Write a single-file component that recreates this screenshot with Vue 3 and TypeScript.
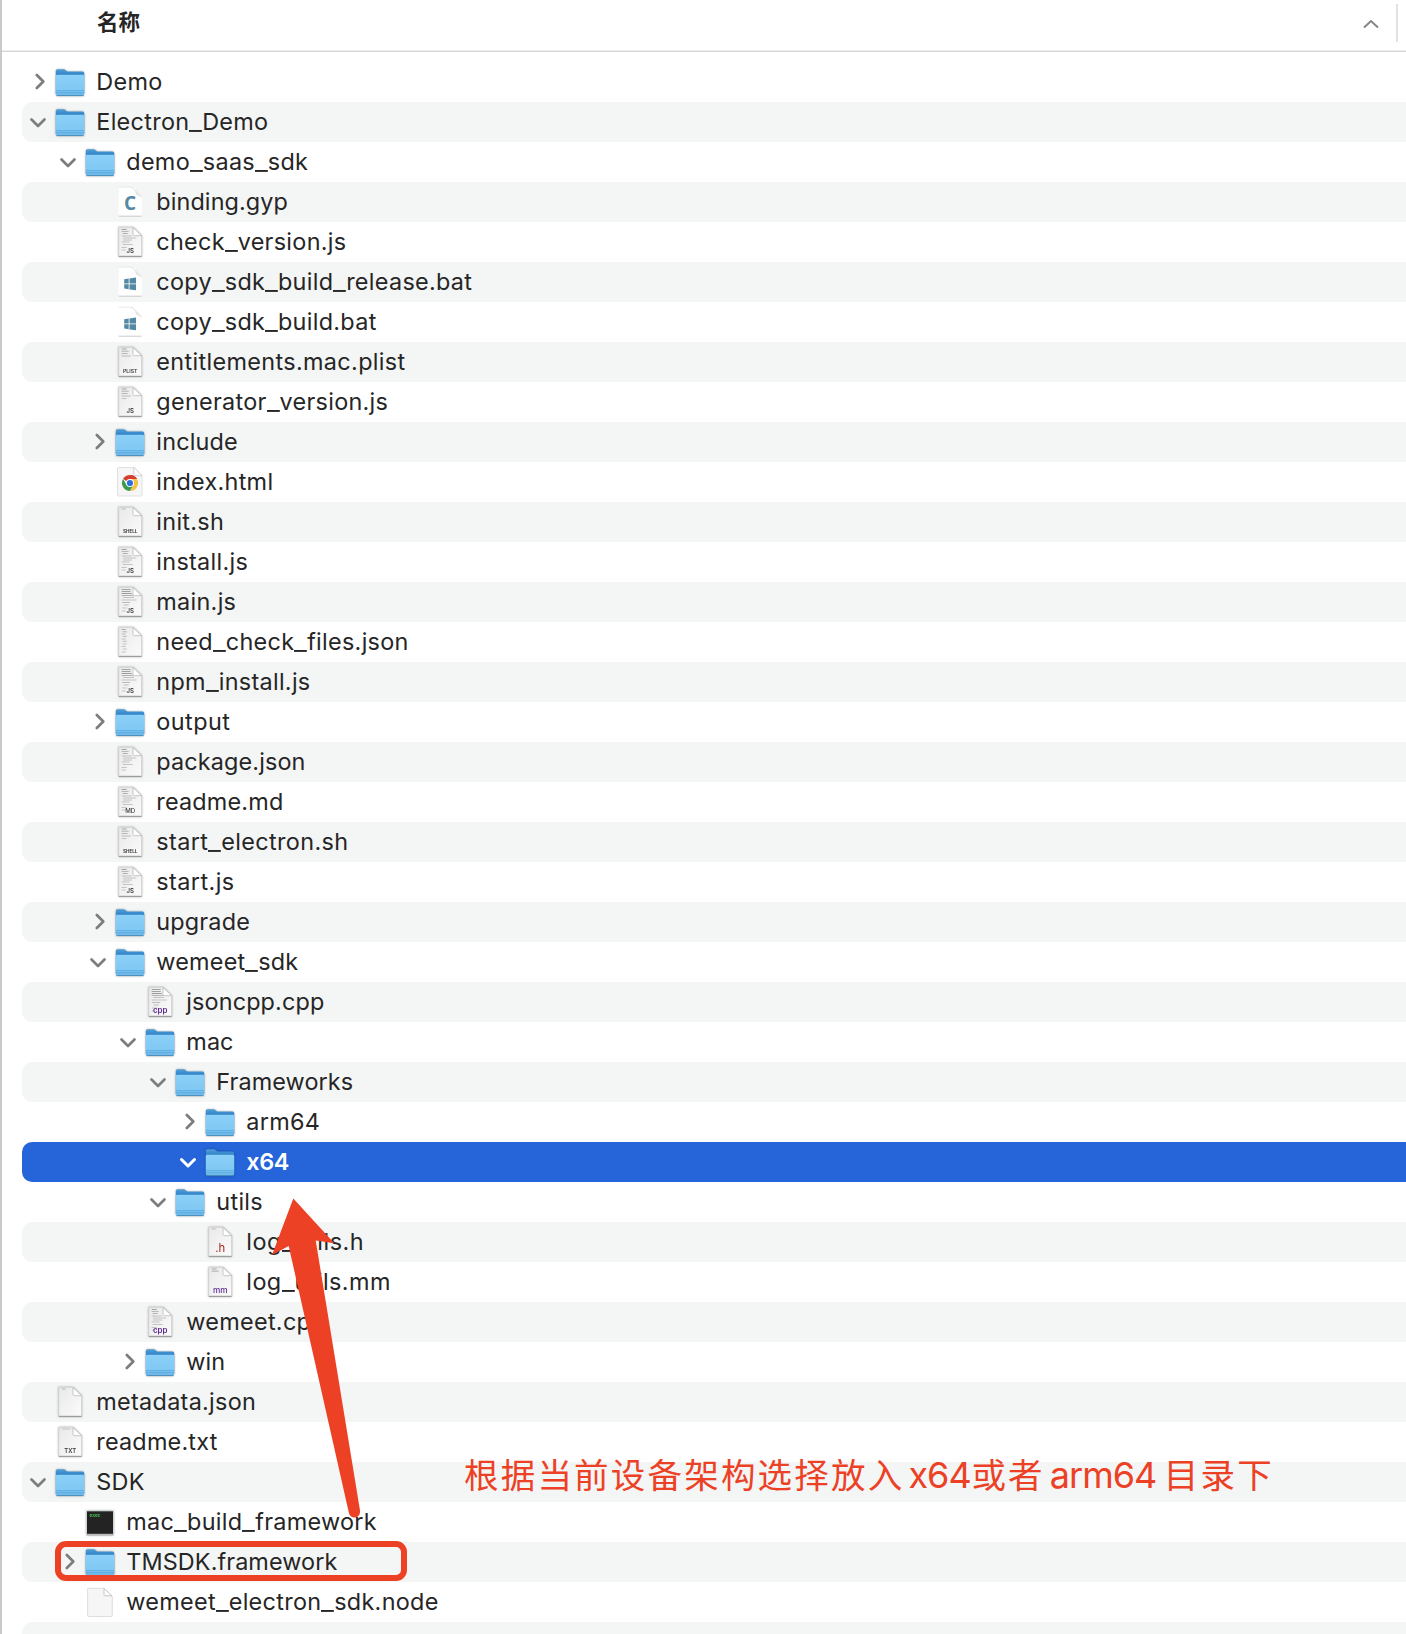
<script setup lang="ts">
type Kind = 'folder' | 'plain' | 'doc' | 'badge' | 'exec' | 'blank'

interface Entry {
  name: string
  level: number
  kind: Kind
  open?: boolean
  selected?: boolean
  /** letter-spacing correction in px */
  track?: number
  /** label printed on the document */
  tag?: string
  /** miniature preview: [x, y, width, opacity] */
  lines?: number[][]
}

const dense = [[9.5, 7.5, 5, 0.5], [9.5, 9.5, 7, 0.35], [10.5, 11.5, 5, 0.4], [9.5, 14, 10, 0.3], [11, 16, 13, 0.3], [11, 18, 9, 0.3], [9.5, 20, 8, 0.3], [10.5, 22.5, 10, 0.3], [9.5, 25.5, 5, 0.3], [9.5, 28, 4, 0.3]]
const heavy = [[9.5, 7.5, 9, 0.5], [9.5, 9.5, 9, 0.5], [9.5, 11.5, 10, 0.55], [9.5, 13.5, 12, 0.4], [11, 15.5, 11, 0.3], [9.5, 18, 15, 0.3], [10, 20.5, 8, 0.35], [11.5, 23, 5, 0.35], [10, 26, 5, 0.3], [9.5, 29, 4, 0.3]]
const short = [[9.5, 7, 5, 0.45], [9.5, 9.2, 7, 0.4], [9.5, 11.5, 6, 0.35], [9.5, 14, 9, 0.35], [10, 16.5, 4, 0.3]]
const column = [[9.5, 7.5, 4, 0.4], [10.5, 9.8, 4, 0.4], [9.5, 12, 4, 0.3], [10.5, 14.3, 4, 0.35], [9.5, 17, 4, 0.3], [10.5, 19.3, 4, 0.35], [10.5, 22, 4, 0.3], [9.5, 24.5, 4, 0.3], [10.5, 27, 4, 0.3], [9.5, 30, 4, 0.3]]
const tiny = [[9.5, 7, 4, 0.35]]

const entries: Entry[] = [
  { name: 'Demo', level: 0, kind: 'folder', open: false },
  { name: 'Electron_Demo', level: 0, kind: 'folder', open: true },
  { name: 'demo_saas_sdk', level: 1, kind: 'folder', open: true },
  { name: 'binding.gyp', level: 2, kind: 'badge', tag: 'C', track: -0.19 },
  { name: 'check_version.js', level: 2, kind: 'doc', tag: 'JS', lines: dense },
  { name: 'copy_sdk_build_release.bat', level: 2, kind: 'badge', tag: 'win' },
  { name: 'copy_sdk_build.bat', level: 2, kind: 'badge', tag: 'win' },
  { name: 'entitlements.mac.plist', level: 2, kind: 'doc', tag: 'PLIST', lines: short.slice(0, 4), track: 0.05 },
  { name: 'generator_version.js', level: 2, kind: 'doc', tag: 'JS', lines: short },
  { name: 'include', level: 2, kind: 'folder', open: false, track: -0.12 },
  { name: 'index.html', level: 2, kind: 'badge', tag: 'chrome' },
  { name: 'init.sh', level: 2, kind: 'doc', tag: 'SHELL', lines: tiny },
  { name: 'install.js', level: 2, kind: 'doc', tag: 'JS', lines: dense },
  { name: 'main.js', level: 2, kind: 'doc', tag: 'JS', lines: heavy },
  { name: 'need_check_files.json', level: 2, kind: 'plain', lines: column },
  { name: 'npm_install.js', level: 2, kind: 'doc', tag: 'JS', lines: heavy },
  { name: 'output', level: 2, kind: 'folder', open: false, track: 0.15 },
  { name: 'package.json', level: 2, kind: 'plain', lines: dense, track: -0.16 },
  { name: 'readme.md', level: 2, kind: 'doc', tag: 'MD', lines: dense, track: -0.1 },
  { name: 'start_electron.sh', level: 2, kind: 'doc', tag: 'SHELL', lines: short, track: 0.08 },
  { name: 'start.js', level: 2, kind: 'doc', tag: 'JS', lines: dense, track: 0.13 },
  { name: 'upgrade', level: 2, kind: 'folder', open: false, track: -0.12 },
  { name: 'wemeet_sdk', level: 2, kind: 'folder', open: true, track: -0.07 },
  { name: 'jsoncpp.cpp', level: 3, kind: 'doc', tag: 'cpp', lines: heavy, track: -0.17 },
  { name: 'mac', level: 3, kind: 'folder', open: true, track: -0.2 },
  { name: 'Frameworks', level: 4, kind: 'folder', open: true, track: -0.2 },
  { name: 'arm64', level: 5, kind: 'folder', open: false },
  { name: 'x64', level: 5, kind: 'folder', open: true, selected: true, track: -0.7 },
  { name: 'utils', level: 4, kind: 'folder', open: true },
  { name: 'log_utils.h', level: 5, kind: 'doc', tag: '.h', lines: tiny, track: 0.2 },
  { name: 'log_utils.mm', level: 5, kind: 'doc', tag: 'mm', lines: short.slice(0, 2), track: 0.12 },
  { name: 'wemeet.cpp', level: 3, kind: 'doc', tag: 'cpp', lines: dense },
  { name: 'win', level: 3, kind: 'folder', open: false, track: -0.2 },
  { name: 'metadata.json', level: 0, kind: 'plain', lines: tiny },
  { name: 'readme.txt', level: 0, kind: 'doc', tag: 'TXT', lines: [[9.5, 7, 9, 0.25]], track: -0.09 },
  { name: 'SDK', level: 0, kind: 'folder', open: true },
  { name: 'mac_build_framework', level: 1, kind: 'exec' },
  { name: 'TMSDK.framework', level: 1, kind: 'folder', open: false, track: -0.2 },
  { name: 'wemeet_electron_sdk.node', level: 1, kind: 'blank' },
]

const pieces = (name: string) => name.split(/(_)/)

const tagStyles: Record<string, { size: number; y: number; color: string; weight: number; length: number }> = {
  JS: { size: 5.8, y: 30.9, color: '#3c3c3c', weight: 600, length: 7.4 },
  MD: { size: 5.8, y: 30.9, color: '#3c3c3c', weight: 500, length: 10 },
  TXT: { size: 5.6, y: 30.8, color: '#3c3c3c', weight: 600, length: 11.8 },
  PLIST: { size: 5.2, y: 31, color: '#3c3c3c', weight: 600, length: 14.6 },
  SHELL: { size: 4.2, y: 30.8, color: '#3c3c3c', weight: 700, length: 14.6 },
  cpp: { size: 8, y: 31, color: '#5b2d91', weight: 600, length: 14.6 },
  mm: { size: 8, y: 30.6, color: '#5b2d91', weight: 500, length: 14.6 },
  '.h': { size: 12, y: 30, color: '#a8211c', weight: 400, length: 10 },
}
</script>

<template>
  <main class="finder">
    <svg class="defs" width="0" height="0" aria-hidden="true">
      <defs>
        <linearGradient id="folderBack" x1="0" y1="0" x2="0" y2="1">
          <stop offset="0" stop-color="#4f9fd6" />
          <stop offset="0.25" stop-color="#2f7fc6" />
          <stop offset="1" stop-color="#2f7fc6" />
        </linearGradient>
        <linearGradient id="folderFront" x1="0" y1="0" x2="0" y2="1">
          <stop offset="0" stop-color="#8bd0f8" />
          <stop offset="0.7" stop-color="#80c9f4" />
          <stop offset="1" stop-color="#69b6e6" />
        </linearGradient>
        <linearGradient id="paper" x1="0" y1="0" x2="1" y2="1">
          <stop offset="0" stop-color="#e9e9e9" />
          <stop offset="1" stop-color="#fbfbfb" />
        </linearGradient>
      </defs>
    </svg>

    <header class="head">
      <span class="head-label">名称</span>
      <svg class="sort" width="18" height="12" viewBox="0 0 18 12"><path d="M2 9.5 9 3l7 6.500" /></svg>
      <i class="column-rule"></i>
    </header>

    <section class="rows">
      <div v-for="entry in entries" :key="entry.name" class="row" :class="{ selected: entry.selected }">
        <i class="indent" :style="{ width: entry.level * 30 + 'px' }"></i>
        <svg class="twisty" width="32" height="40" viewBox="0 0 32 40">
          <path v-if="entry.open === true" d="M9.500 17.500 16 24l6.500-6.500" />
          <path v-else-if="entry.open === false" d="M14.800 13 21.300 19.500 14.800 26" />
        </svg>

        <svg class="icon" :class="entry.kind" width="32" height="40" viewBox="0 0 32 40">
          <template v-if="entry.kind === 'folder'">
            <path d="M1.800 9q0-1.700 1.700-1.700h6.200q1 0 1.700.7l1.200 1.100q.6.500 1.500.500h14.400q1.700 0 1.700 1.600v20.500H1.800z" fill="url(#folderBack)" />
            <path d="M1.800 14.200q0-1.400 1.500-1.400h25.400q1.500 0 1.500 1.400V32q0 1.800-1.800 1.800H3.600Q1.800 33.800 1.800 32z" fill="url(#folderFront)" />
            <path d="M2 28.600h28M2 30.600h28" stroke="#58a7dc" stroke-width=".8" />
            <path d="M2.500 33.600h27" stroke="#4387b6" stroke-width=".9" />
          </template>

          <template v-else-if="entry.kind === 'doc' || entry.kind === 'plain'">
            <path d="M4.800 5.300h14.300l8.500 8.700v20.200H4.800z" fill="url(#paper)" stroke="#cdcdcd" stroke-width=".7" />
            <path d="M4.800 34.400h22.800" stroke="#8f8f8f" stroke-width=".9" />
            <path v-for="(l, i) in entry.lines" :key="i" :d="`M${l[0] - 1.8} ${l[1]}h${l[2]}`" stroke="#555" stroke-width="1" :stroke-opacity="l[3]" />
            <path d="M19 5.500v6.800q0 1.400 1.400 1.400h7.200z" fill="#fff" stroke="#b9b9b9" stroke-width=".8" />
            <text
              v-if="entry.tag"
              x="16.200"
              :y="tagStyles[entry.tag].y"
              text-anchor="middle"
              :font-size="tagStyles[entry.tag].size"
              :font-weight="tagStyles[entry.tag].weight"
              :fill="tagStyles[entry.tag].color"
              :textLength="tagStyles[entry.tag].length"
              lengthAdjust="spacingAndGlyphs"
            >{{ entry.tag }}</text>
          </template>

          <template v-else-if="entry.kind === 'badge' && entry.tag !== 'chrome'">
            <path d="M4.700 5h14.500q2 0 3 3 .6 2 2 3 3.400 1 3.400 4v18.800H4.700z" fill="#fff" />
            <path d="M16 5h2.700l8.900 9v2q-1-2.500-3.800-2.600-1.800-.2-2-2.200Q21.300 7.600 16 5z" fill="#e6e6e6" />
            <path d="M4.700 5.200h14" stroke="#e2e2e2" stroke-width=".7" />
            <path d="M4.800 34.200h22.800" stroke="#c5c5c5" stroke-width=".9" />
            <text v-if="entry.tag === 'C'" class="letter" x="16" y="28.200" text-anchor="middle">C</text>
            <path v-else d="M10.200 17.300l4.500-.7v5h-4.500zM15.500 16.500l6.500-1v6.100h-6.500zM10.200 22.300h4.500v5l-4.500-.7zM15.500 22.300H22v6l-6.500-.9z" fill="#5489a5" />
          </template>

          <template v-else-if="entry.tag === 'chrome'">
            <path d="M4 5.500h16l8 8V33q0 1-1 1H4.500q-1 0-1-1V6z" fill="#f6f6f6" stroke="#dadada" stroke-width=".8" />
            <path d="M19.800 5.500v7.200q0 1 1 1H28z" fill="#fff" stroke="#c4c4c4" stroke-width=".7" />
            <path d="M16 21 9.070 17A8 8 0 0 1 22.930 17z" fill="#d23f31" />
            <path d="M16 13a8 8 0 0 1 6.930 4H16z" fill="#d23f31" />
            <path d="M9.070 17A8 8 0 0 0 16 29l3.460-6L16 21l-3.460 2z" fill="#3a9a50" />
            <path d="M22.930 17A8 8 0 0 1 16 29l3.460-6L16 17z" fill="#f5c142" />
            <circle cx="16" cy="21" r="4" fill="#fff" />
            <circle cx="16" cy="21" r="3.100" fill="#2f6fe0" />
          </template>

          <template v-else-if="entry.kind === 'exec'">
            <path d="M2.200 8.500h27.600v24H2.200z" fill="#c9d3d3" />
            <path d="M3 9.300h26v22.500H3z" fill="#232323" />
            <path d="M2.500 33h27" stroke="#999" stroke-width=".8" />
            <text x="5.500" y="15.300" font-size="4.500" font-weight="700" fill="#49b84f" textLength="11" lengthAdjust="spacingAndGlyphs">exec</text>
          </template>

          <template v-else>
            <path d="M4 6.300h16l8.300 8.300V33.500q0 1-1 1H4.600q-1 0-1-1V7z" fill="#f6f6f6" stroke="#d6d6d6" stroke-width=".8" />
            <path d="M20 6.500v6.300q0 1 1 1h7z" fill="#fff" stroke="#bbb" stroke-width=".8" />
          </template>
        </svg>
        <span class="name" :style="{ letterSpacing: 0.3 + (entry.track ?? 0) + 'px' }"><span v-for="(piece, i) in pieces(entry.name)" :key="i" :class="{ underscore: piece === '_' }">{{ piece }}</span></span>
      </div>
      <div class="row"></div>
    </section>

    <div class="highlight"></div>
    <svg class="arrow" width="100" height="330" viewBox="266 1192 100 330">
      <path d="M293.300 1198.500 334.300 1243.300 315.700 1240.400 360 1510.500Q360.500 1516 355.500 1517.500 350 1518 348.800 1512.500L288.700 1246 272 1255z" fill="#ec4125" />
    </svg>
    <p class="note">根据当前设备架构选择放入<b class="x64">x64</b>或者<b class="arm">arm64</b>目录下</p>
  </main>
</template>

<style>
body {
  overflow: hidden;
  background: #fff;
}
</style>

<style scoped>
.finder {
  position: relative;
  box-sizing: border-box;
  width: 1406px;
  height: 1634px;
  overflow: hidden;
  border-left: 2px solid #cacaca;
  background: #fff;
  color: #262626;
  font-family: Inter, 'Noto Sans CJK SC', sans-serif;
}

.defs {
  position: absolute;
}

.head {
  display: flex;
  box-sizing: border-box;
  height: 52px;
  padding: 4px 8px 0 95px;
  border-bottom: 1px solid #d6d6d6;
  box-shadow: inset 0 -1px #ededed;
}

.head-label {
  flex: 1;
  color: #262626;
  font: 700 21.500px/34px 'Noto Sans CJK SC', sans-serif;
}

.sort {
  margin: 14px 16px 0 0;
}

.sort path {
  fill: none;
  stroke: #858585;
  stroke-width: 2;
}

.column-rule {
  width: 2px;
  height: 38px;
  background: #e2e2e2;
}

.rows {
  padding: 10px 0 0 20px;
}

.row {
  display: flex;
  height: 40px;
  border-radius: 10px 0 0 10px;
}

.row:nth-child(even) {
  background: #f4f5f5;
}

.row.selected {
  background: #2565d9;
  color: #fff;
}

.indent,
.twisty,
.icon {
  flex: none;
}

.twisty path {
  fill: none;
  stroke: #7d7d7d;
  stroke-width: 2.700;
  stroke-linecap: round;
  stroke-linejoin: round;
}

.selected .twisty path {
  stroke: #fff;
  stroke-width: 3;
}

.icon {
  overflow: visible;
}

.icon.folder,
.icon.doc,
.icon.plain,
.icon.exec {
  filter: drop-shadow(0 0.500px 0.800px rgba(0, 0, 0, 0.3));
}

.letter {
  fill: #5489a5;
  font: 700 19px 'Open Sans', sans-serif;
}

.name {
  margin-left: 10.300px;
  font-size: 23.400px;
  line-height: 39px;
  white-space: pre;
}

.underscore {
  display: inline-block;
  margin: 0 0.950px;
  transform: scaleX(1.200);
}

.selected .name {
  font-weight: 600;
}

.highlight {
  position: absolute;
  top: 1541px;
  left: 53px;
  box-sizing: border-box;
  width: 352px;
  height: 40px;
  border: 6px solid #ec4125;
  border-radius: 11px;
}

.arrow {
  position: absolute;
  top: 1192px;
  left: 264px;
}

.note {
  position: absolute;
  top: 1448px;
  left: 462px;
  margin: 0;
  color: #ec4125;
  font: 400 34.500px/50px 'Noto Sans CJK SC', sans-serif;
  letter-spacing: 2.200px;
  white-space: nowrap;
}

.note b {
  display: inline-block;
  font: 400 36px/50px Inter, sans-serif;
  letter-spacing: -1px;
}

.x64 {
  width: 67px;
  text-indent: 4px;
}

.arm {
  width: 119px;
  text-indent: 5px;
}
</style>
